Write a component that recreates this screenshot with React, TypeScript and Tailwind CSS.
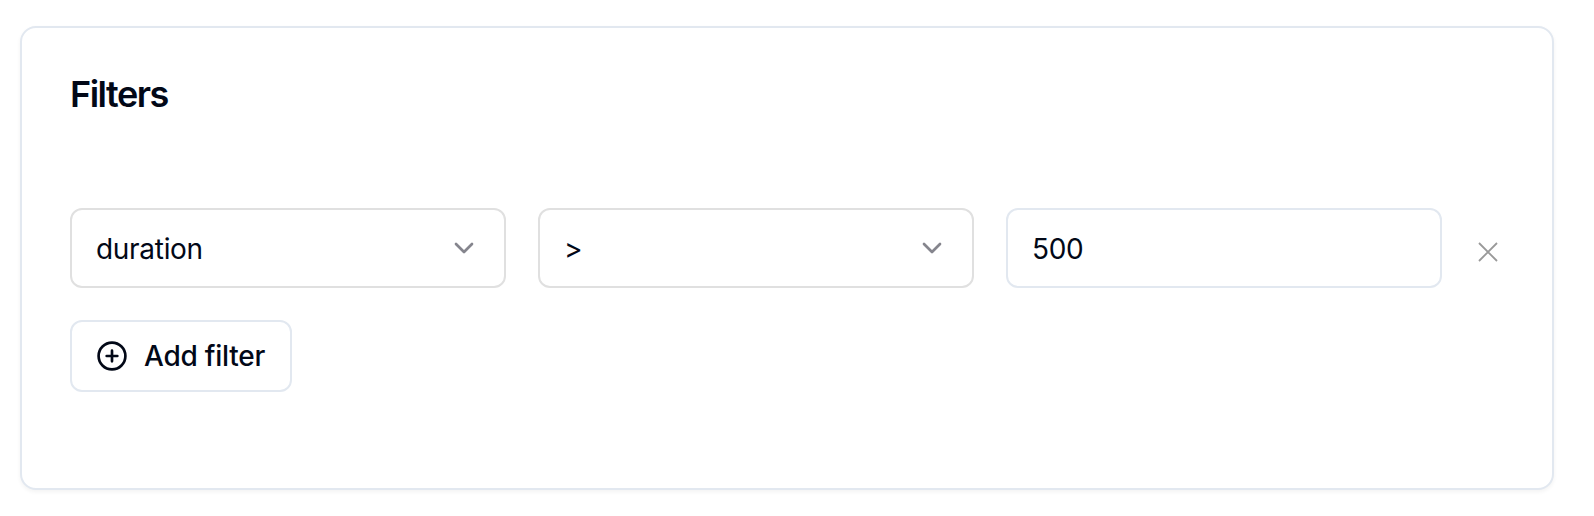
import { useState } from "react";

function Chevron() {
  return (
    <svg className="h-8 w-8 shrink-0 text-[#85858d]" viewBox="0 0 32 32" fill="none" stroke="currentColor" strokeWidth="2.7" strokeLinecap="round" strokeLinejoin="round">
      <path d="M8 12l8 8 8-8" />
    </svg>
  );
}

function Select({ value }: { value: string }) {
  return (
    <button type="button" className="flex h-20 w-[436px] items-center justify-between rounded-xl border-2 border-[#e0e0e0] bg-white px-6">
      <span className="pt-px tracking-[-0.3px]">{value}</span>
      <Chevron />
    </button>
  );
}

export default function App() {
  const [value, setValue] = useState("500");
  return (
    <main className="h-[516px] bg-white pt-[26px] pl-5 font-['Inter',sans-serif] text-[28px] leading-10 text-[#020817]">
      <section className="h-[464px] w-[1534px] rounded-2xl border-2 border-[#e2e8f0] bg-white px-12 pt-12 shadow-[0_2px_4px_rgba(0,0,0,0.05)]">
        <h3 className="text-4xl leading-9 font-semibold tracking-[-1.5px]">Filters</h3>
        <div className="mt-24 flex items-center gap-8">
          <Select value="duration" />
          <Select value=">" />
          <input
            aria-label="Filter value"
            className="h-20 w-[436px] rounded-xl border-2 border-[#e2e8f0] bg-white px-6 pt-0.5 tracking-[-0.3px] outline-none"
            value={value}
            onChange={(e) => setValue(e.target.value)}
          />
          <button type="button" aria-label="Remove filter" className="pt-2">
            <svg className="h-7 w-7 text-[#999]" viewBox="0 0 28 28" fill="none" stroke="currentColor" strokeWidth="1.8">
              <path d="M5 5l18 18M23 5L5 23" />
            </svg>
          </button>
        </div>
        <button type="button" className="mt-8 flex h-[72px] w-[222px] items-center gap-4 rounded-xl border-2 border-[#e2e8f0] bg-white pl-6 font-medium">
          <svg className="h-8 w-8 shrink-0" viewBox="0 0 32 32" fill="none" stroke="currentColor" strokeWidth="2.67" strokeLinecap="round">
            <circle cx="16" cy="16" r="13.4" />
            <path d="M16 10.67v10.66M10.67 16h10.66" />
          </svg>
          <span className="whitespace-nowrap tracking-[-0.25px]">Add filter</span>
        </button>
      </section>
    </main>
  );
}
